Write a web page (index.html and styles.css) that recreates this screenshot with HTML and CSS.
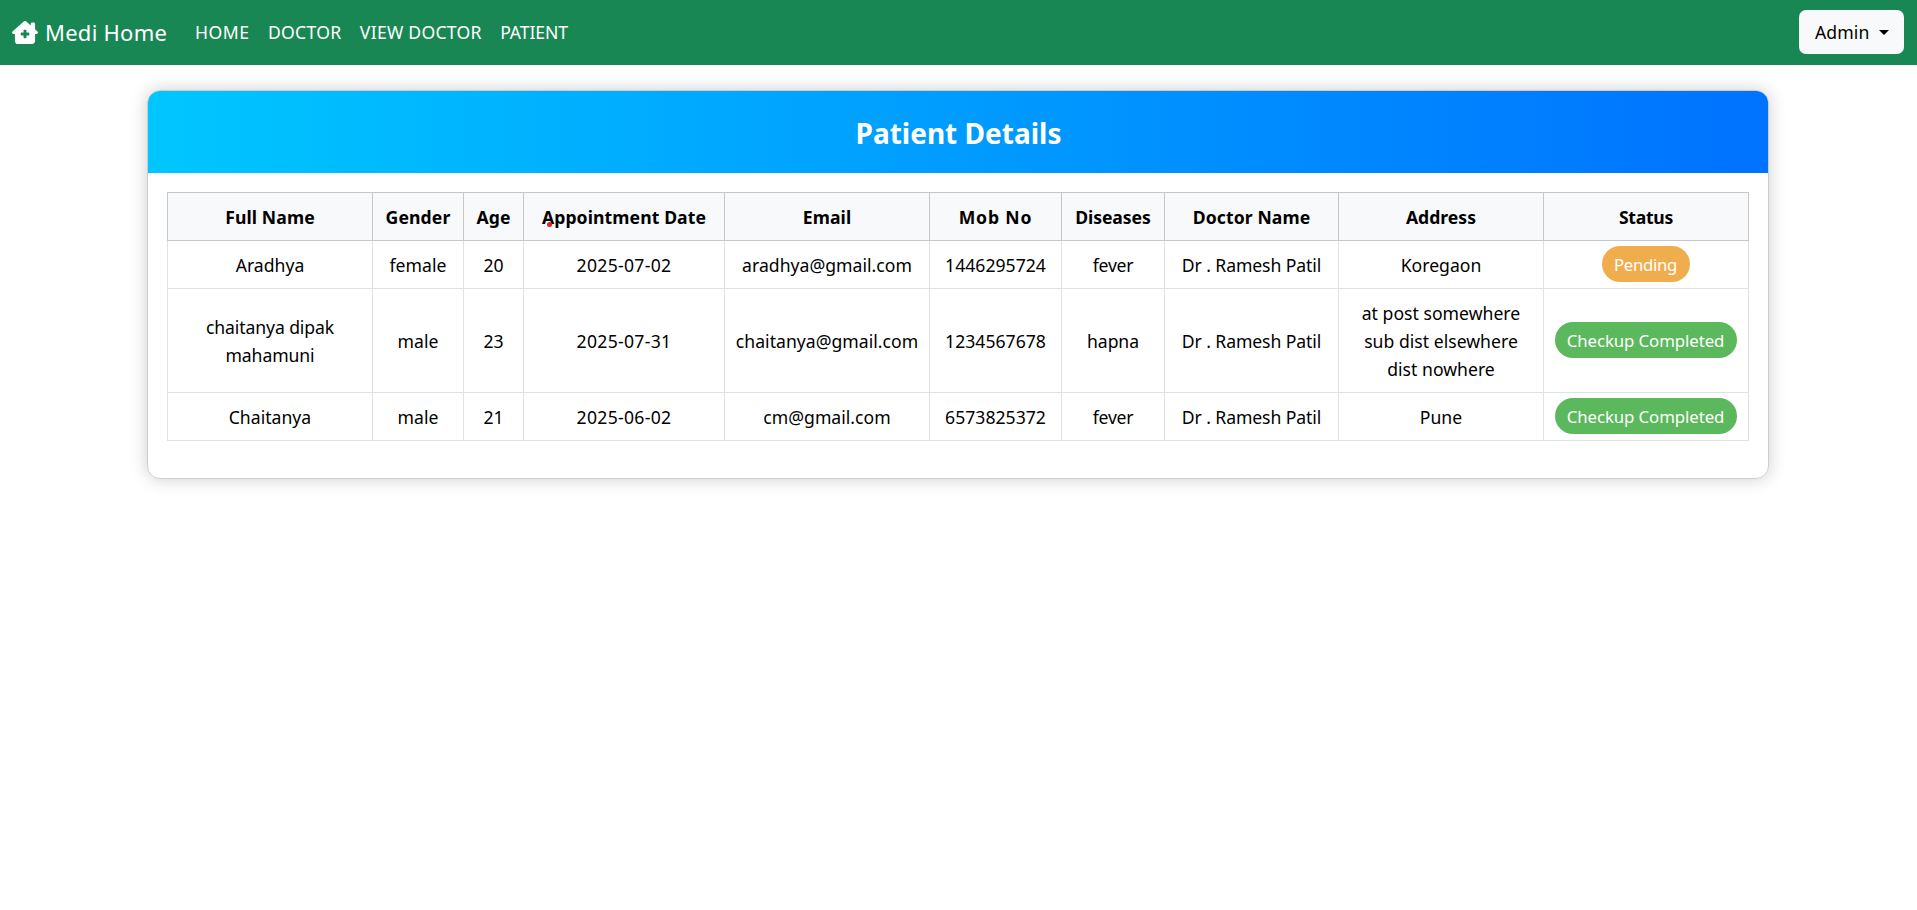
FILE: index.html
```
<!DOCTYPE html>
<html lang="en">
<head>
<meta charset="utf-8">
<title>Medi Home</title>
<link rel="stylesheet" href="styles.css">
</head>
<body>
<nav class="navbar">
  <a class="brand">
    <svg class="brand-icon" viewBox="0 0 576 512" fill="currentColor"><path d="M543.8 287.6c17 0 32-14 32-32.1c1-9-3-17-11-24L512 185V64c0-17.7-14.3-32-32-32H448c-17.7 0-32 14.3-32 32v36.7L309.5 7c-6-5-14-7-21-7s-15 1-22 8L10 231.5c-7 7-10 15-10 24c0 18 14 32.1 32 32.1h32V448c0 35.3 28.7 64 64 64H448.5c35.5 0 64.2-28.8 64-64.3l-.7-160.2h32zM256 208c0-8.8 7.2-16 16-16h32c8.8 0 16 7.2 16 16v48h48c8.8 0 16 7.2 16 16v32c0 8.8-7.2 16-16 16H320v48c0 8.8-7.2 16-16 16H272c-8.8 0-16-7.2-16-16V320H208c-8.8 0-16-7.2-16-16V272c0-8.8 7.2-16 16-16h48V208z"/></svg>
    <span>Medi Home</span>
  </a>
  <div class="nav-links">
    <a class="nav-link wide">HOME</a>
    <a class="nav-link">DOCTOR</a>
    <a class="nav-link">VIEW DOCTOR</a>
    <a class="nav-link snug">PATIENT</a>
  </div>
  <button class="admin-btn"><span>Admin</span><i class="caret"></i></button>
</nav>
<main class="card">
  <h1 class="card-header">Patient Details</h1>
  <div class="card-body">
    <table class="patients">
      <colgroup><col class="c-name"><col class="c-gender"><col class="c-age"><col class="c-date"><col class="c-email"><col class="c-mob"><col class="c-disease"><col class="c-doctor"><col class="c-address"><col class="c-status"></colgroup>
      <thead>
        <tr><th>Full Name</th><th>Gender</th><th>Age</th><th><span class="marked">Appointment Date</span></th><th>Email</th><th class="wide">Mob No</th><th class="snug">Diseases</th><th>Doctor Name</th><th class="even">Address</th><th class="tight">Status</th></tr>
      </thead>
      <tbody>
        <tr><td>Aradhya</td><td>female</td><td>20</td><td class="date">2025-07-02</td><td>aradhya@gmail.com</td><td>1446295724</td><td class="tight">fever</td><td class="snug">Dr . Ramesh Patil</td><td>Koregaon</td><td class="status"><span class="pill pending">Pending</span></td></tr>
        <tr class="tall"><td class="snug">chaitanya dipak<br>mahamuni</td><td>male</td><td>23</td><td class="date">2025-07-31</td><td>chaitanya@gmail.com</td><td>1234567678</td><td class="snug">hapna</td><td class="snug">Dr . Ramesh Patil</td><td>at post somewhere<br>sub dist elsewhere<br>dist nowhere</td><td class="status"><span class="pill done">Checkup Completed</span></td></tr>
        <tr><td>Chaitanya</td><td>male</td><td>21</td><td class="date">2025-06-02</td><td>cm@gmail.com</td><td>6573825372</td><td class="tight">fever</td><td class="snug">Dr . Ramesh Patil</td><td>Pune</td><td class="status"><span class="pill done">Checkup Completed</span></td></tr>
      </tbody>
    </table>
  </div>
</main>
</body>
</html>
```
FILE: styles.css
```
* { box-sizing: border-box; }

body {
  margin: 0;
  min-height: 100vh;
  background: #fff;
  color: #000;
  font-family: "Noto Sans", "Open Sans", sans-serif;
  font-size: 17.6px;
  line-height: 28px;
}

/* Navbar */
.navbar {
  display: flex;
  align-items: center;
  height: 65px;
  padding: 0 13px 1px 12px;
  background: #198754;
  color: #fff;
}
.brand {
  display: flex;
  align-items: center;
  gap: 7px;
  width: 183px;
  font-size: 22px;
  letter-spacing: .25px;
  white-space: nowrap;
}
.brand-icon { width: 26px; height: 23px; }
.nav-links {
  display: flex;
  gap: 18.5px;
  flex: 1;
  letter-spacing: .25px;
}
.nav-link.wide { letter-spacing: .5px; }
.nav-link.snug { letter-spacing: -.1px; }
.admin-btn {
  display: flex;
  align-items: center;
  gap: 9px;
  width: 105px;
  height: 44px;
  padding: 0 15px 0 16px;
  border: 0;
  border-radius: 7px;
  background: #f8f9fa;
  color: #000;
  font: inherit;
  letter-spacing: .12px;
}
.caret {
  border-top: 5px solid #000;
  border-left: 5px solid transparent;
  border-right: 5px solid transparent;
}

/* Card */
.card {
  width: 1622px;
  height: 389px;
  margin: 25px 0 0 147px;
  border: 1px solid #cdcdcd;
  border-radius: 13px;
  overflow: hidden;
  box-shadow: 0 0 17px rgba(0, 0, 0, .2);
}
.card-header {
  display: flex;
  align-items: center;
  justify-content: center;
  height: 82px;
  margin: 0;
  padding: 2px 0 0 1px;
  background: linear-gradient(to right, #00c6ff, #0072ff);
  color: #fff;
  font-size: 28px;
  font-weight: 700;
}
.card-body { padding: 19px; }

/* Table */
.patients {
  width: 1582px;
  table-layout: fixed;
  border-collapse: collapse;
  text-align: center;
}
.patients tr { height: 48px; }
.patients .tall { height: 104px; }
.patients th,
.patients td {
  padding: 0;
  border: 1px solid #dee2e6;
  vertical-align: middle;
  white-space: nowrap;
}
.patients th {
  border-color: #c6c7c8;
  background: #f8f9fa;
  font-weight: 700;
  letter-spacing: .1px;
}
.patients td { letter-spacing: .02px; }
.patients .status { padding: 0 1px 2px 0; }
.patients .date { letter-spacing: .3px; }
.patients .wide { letter-spacing: .85px; }
.patients .even { letter-spacing: 0; }
.patients .snug { letter-spacing: -.1px; }
.patients .tight { letter-spacing: -.27px; }

.c-name { width: 205px; }
.c-gender { width: 91px; }
.c-age { width: 60px; }
.c-date { width: 201px; }
.c-email { width: 205px; }
.c-mob { width: 132px; }
.c-disease { width: 103px; }
.c-doctor { width: 174px; }
.c-address { width: 205px; }
.c-status { width: 205px; }

.marked { position: relative; }
.marked::after {
  content: "";
  position: absolute;
  left: 5px;
  top: 17px;
  width: 5px;
  height: 5px;
  border-radius: 50%;
  background: #ec1c24;
}

.pill {
  display: block;
  height: 36px;
  margin: 0 auto;
  border-radius: 18px;
  color: #fff;
  font-size: 16.8px;
  line-height: 38px;
}
.pending { width: 88px; background: #f0ad4e; letter-spacing: -.3px; }
.done { width: 182px; background: #5cb85c; letter-spacing: -.08px; }
```
